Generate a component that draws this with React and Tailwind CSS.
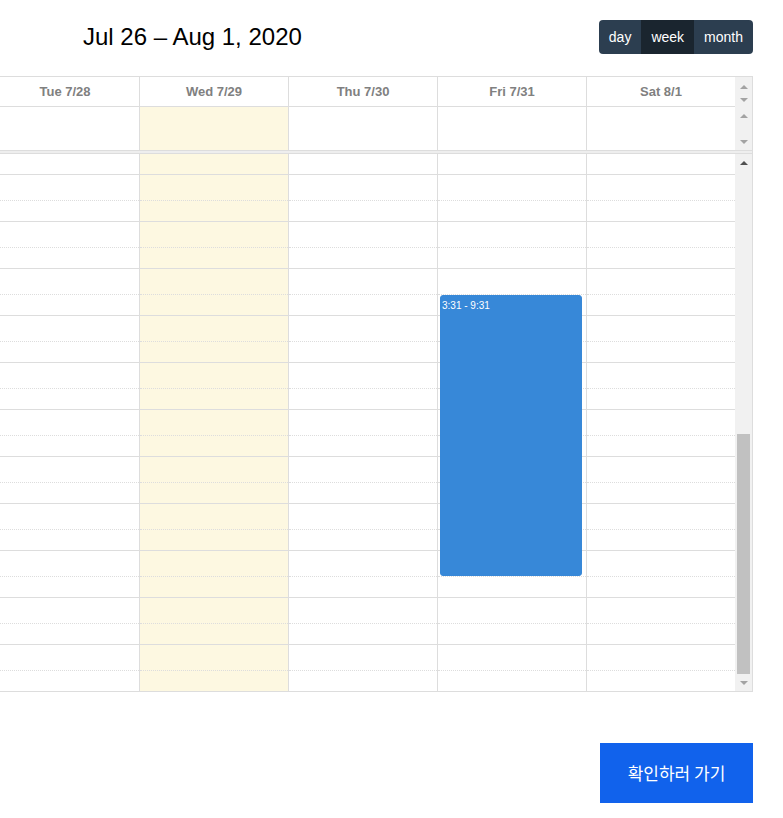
import React from "react"

const days = ["Tue 7/28", "Wed 7/29", "Thu 7/30", "Fri 7/31", "Sat 8/1"]
const views = ["day", "week", "month"]

// Small triangle used for the fake scrollbar buttons
const Arrow = ({ up, color }) => (
  <svg width="8" height="4" viewBox="0 0 8 4">
    <polygon points={up ? "0,4 8,4 4,0" : "0,0 8,0 4,4"} fill={color} />
  </svg>
)

// One column of the time grid: a partial row then 11 hour/half-hour pairs
const SlotColumn = ({ today, children }) => (
  <div className={`relative w-[149px] border-l border-[#ddd] ${today ? "bg-[#fdf8e1]" : ""}`}>
    <div className="h-[20px]" />
    {Array.from({ length: 11 }).map((_, i) => (
      <div key={i}>
        <div className="h-[26px] border-t border-[#ddd]" />
        <div className="h-[21px] border-t border-dotted border-[#ddd]" />
      </div>
    ))}
    {children}
  </div>
)

const App = () => {
  return (
    <div className="min-h-screen bg-white font-['Liberation_Sans',Arial,sans-serif] text-[#333]">
      {/* Toolbar */}
      <div className="flex items-center justify-between pt-[20px] pr-[30px]">
        <h2 className="ml-[83px] text-[24px] leading-none text-black">Jul 26 – Aug 1, 2020</h2>
        <div className="flex h-[34px] overflow-hidden rounded-[4px]">
          {views.map((v) => (
            <div
              key={v}
              className={`flex items-center px-[10px] text-[14px] text-white ${
                v === "week" ? "bg-[#1a252f]" : "bg-[#2c3e50]"
              }`}
            >
              {v}
            </div>
          ))}
        </div>
      </div>

      {/* Calendar */}
      <div className="mt-[22px] overflow-hidden">
        <div className="-ml-[10px] w-[763px] border-y border-r border-[#ddd]">
          <div className="flex">
            <div className="flex flex-col">
              <div className="flex h-[30px] border-b border-[#ddd]">
                {days.map((d) => (
                  <div
                    key={d}
                    className="flex w-[149px] items-center justify-center border-l border-[#ddd] text-[13px] font-bold text-[#808080]"
                  >
                    {d}
                  </div>
                ))}
              </div>
              <div className="flex h-[43px]">
                {days.map((d) => (
                  <div
                    key={d}
                    className={`w-[149px] border-l border-[#ddd] ${d === "Wed 7/29" ? "bg-[#fdf8e1]" : ""}`}
                  />
                ))}
              </div>
            </div>
            <div className="flex w-[17px] flex-col bg-[#f1f1f1]">
              <div className="flex h-[15px] items-end justify-center pb-[3px]">
                <Arrow up color="#a3a3a3" />
              </div>
              <div className="flex h-[15px] items-center justify-center">
                <Arrow color="#a3a3a3" />
              </div>
              <div className="flex h-[17px] items-center justify-center">
                <Arrow up color="#a3a3a3" />
              </div>
              <div className="flex-1" />
              <div className="flex h-[17px] items-center justify-center">
                <Arrow color="#a3a3a3" />
              </div>
            </div>
          </div>

          <div className="h-[4px] border-y border-[#ddd] bg-[#eee]" />

          <div className="flex h-[537px] overflow-hidden">
            {days.map((d) => (
              <SlotColumn key={d} today={d === "Wed 7/29"}>
                {d === "Fri 7/31" && (
                  <div className="absolute left-[2px] right-[4px] top-[141px] h-[281px] rounded-[3px] border border-[#3788d8] bg-[#3788d8] px-[1px] pt-[4px] text-[10px] leading-[12px] text-white">
                    3:31 - 9:31
                  </div>
                )}
              </SlotColumn>
            ))}
            <div className="flex w-[17px] flex-col bg-[#f1f1f1]">
              <div className="flex h-[17px] items-center justify-center">
                <Arrow up color="#505050" />
              </div>
              <div className="flex-1" />
              <div className="mx-[2px] h-[240px] bg-[#c1c1c1]" />
              <div className="flex h-[17px] items-center justify-center">
                <Arrow color="#a3a3a3" />
              </div>
            </div>
          </div>
        </div>
      </div>

      {/* Confirm button */}
      <div className="mt-[51px] flex justify-end pr-[30px] pb-[15px]">
        <button className="h-[60px] w-[153px] bg-[#1162ec] font-['Noto_Sans_CJK_KR',sans-serif] text-[17px] text-white">
          확인하러 가기
        </button>
      </div>
    </div>
  )
}

export default App
